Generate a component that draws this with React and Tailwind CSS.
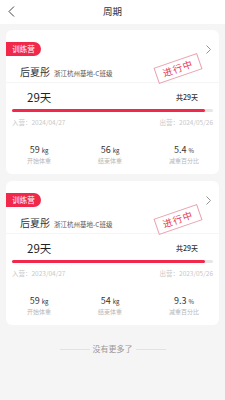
import React from "react";

const cycles = [
  { start: "2024/04/27", end: "2024/05/26", from: 59, to: 56, pct: "5.4" },
  { start: "2023/04/27", end: "2023/05/26", from: 59, to: 54, pct: "9.3" },
];

const CycleCard = ({ item }) => {
  return (
    <div className="relative bg-white rounded-[6px] h-[144px] pt-[12px] overflow-hidden">
      <div className="flex items-center justify-between">
        <span className="h-[14px] w-[35px] rounded-r-full bg-[#f2284b] text-white text-[7.5px] leading-none flex items-center justify-center">
          训练营
        </span>
        <svg width="5" height="9" viewBox="0 0 5 9" className="mr-[8px]">
          <path d="M0.5 0.5 L4.5 4.5 L0.5 8.5" fill="none" stroke="#888" strokeWidth="0.9" />
        </svg>
      </div>

      <div className="flex items-baseline pl-[14px] mt-[10px]">
        <span className="text-[10px] leading-[12px] text-[#333]">后夏彤</span>
        <span className="text-[6.5px] leading-[8px] text-[#555] ml-[4px]">浙江杭州基地-C班级</span>
      </div>

      <div className="h-px bg-[#f5f5f5] mt-[4px]"></div>

      <div className="flex items-center justify-between px-[21px] mt-[8px]">
        <span className="text-[11.5px] leading-[13px] text-[#222]">29天</span>
        <span className="text-[7px] leading-[9px] text-[#333] font-medium">共29天</span>
      </div>

      <div className="mx-[6px] mt-[5px] h-[3px] rounded-full bg-[#e6e6e6]">
        <div className="h-full w-[96%] rounded-full bg-[#f2284b]"></div>
      </div>

      <div className="flex justify-between px-[6px] mt-[6px] text-[6.5px] leading-[8px] text-[#c8c8c8]">
        <span>入营：{item.start}</span>
        <span>出营：{item.end}</span>
      </div>

      <div className="flex justify-between pl-[21px] pr-[20px] mt-[18px]">
        {[
          [item.from, "kg", "开始体重"],
          [item.to, "kg", "结束体重"],
          [item.pct, "%", "减重百分比"],
        ].map(([v, u, l], i) => (
          <div key={i} className="flex flex-col items-center">
            <span className="text-[9px] leading-[11px] text-[#333]">
              {v} <span className="text-[6px]">{u}</span>
            </span>
            <span className="text-[6px] leading-[8px] text-[#b8b8b8] mt-[1px]">{l}</span>
          </div>
        ))}
      </div>

      <div className="absolute left-[149px] top-[30px] w-[46px] h-[17px] border border-[#e9a3b0] -rotate-[19deg] flex items-center justify-center">
        <span className="text-[9.5px] leading-none text-[#e8324f] tracking-[1px]">进行中</span>
      </div>
    </div>
  );
};

export default function App() {
  return (
    <div className="w-[225px] h-[400px] bg-[#f5f5f5] font-['Noto_Sans_CJK_SC',sans-serif]">
      <div className="relative h-[24px] bg-white flex items-center justify-center">
        <svg width="7" height="11" viewBox="0 0 7 11" className="absolute left-[8px] top-[6px]">
          <path d="M6 0.5 L1 5.5 L6 10.5" fill="none" stroke="#444" strokeWidth="1" />
        </svg>
        <span className="text-[9.5px] leading-none text-[#333]">周期</span>
      </div>

      <div className="px-[6px] pt-[6px] flex flex-col gap-[7px]">
        {cycles.map((c, i) => (
          <CycleCard key={i} item={c} />
        ))}
      </div>

      <div className="flex items-center justify-center gap-[3px] mt-[19px]">
        <div className="w-[30px] h-px bg-[#e2e2e2]"></div>
        <span className="text-[8px] leading-[10px] text-[#999]">没有更多了</span>
        <div className="w-[30px] h-px bg-[#e2e2e2]"></div>
      </div>
    </div>
  );
}
